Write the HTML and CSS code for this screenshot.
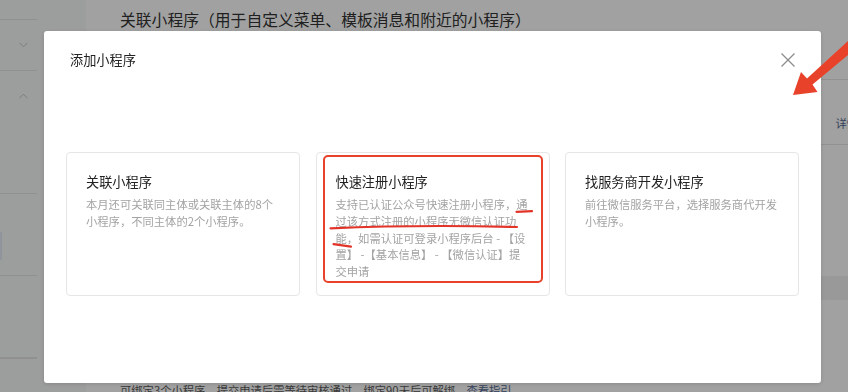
FILE: index.html
```html
<!DOCTYPE html>
<html lang="zh-CN">
<head>
    <meta charset="UTF-8">
    <meta name="viewport" content="width=device-width, initial-scale=1.0">
    <title>添加小程序</title>
    <link rel="stylesheet" href="styles.css">
</head>
<body>

<div class="page">
    <!-- left menu -->
    <aside class="sidebar">
        <div class="menu">
            <div class="menu-item top"></div>
            <div class="menu-item fold">
                <svg class="chevron" width="9" height="6" viewBox="0 0 9 6"><polyline points="0.5,0.8 4.5,4.8 8.5,0.8"/></svg>
            </div>
            <div class="menu-item group">
                <svg class="chevron" width="9" height="6" viewBox="0 0 9 6"><polyline points="0.5,5.2 4.5,1.2 8.5,5.2"/></svg>
            </div>
            <div class="menu-item sub active"></div>
            <div class="menu-item sub"></div>
            <div class="menu-item"></div>
        </div>
    </aside>

    <main class="main">
        <h1 class="page-title">关联小程序（用于自定义菜单、模板消息和附近的小程序）</h1>
        <div class="bind-list">
            <div class="bind-row"><span class="row-link">详情</span></div>
        </div>
        <div class="table-head"></div>
        <p class="bind-tip">可绑定3个小程序，提交申请后需等待审核通过，绑定90天后可解绑。<a href="#">查看指引</a></p>
    </main>
</div>

<div class="mask"></div>

<!-- dialog -->
<div class="dialog">
    <div class="dialog-head">
        <h3 class="dialog-title">添加小程序</h3>
        <svg class="dialog-close" width="14" height="14" viewBox="0 0 14 14">
            <line x1="0.5" y1="0.5" x2="13.5" y2="13.5"/>
            <line x1="13.5" y1="0.5" x2="0.5" y2="13.5"/>
        </svg>
    </div>
    <div class="choice-list">
        <div class="choice">
            <h4 class="choice-title">关联小程序</h4>
            <p class="choice-desc">本月还可关联同主体或关联主体的8个<br>小程序，不同主体的2个小程序。</p>
        </div>
        <div class="choice">
            <h4 class="choice-title">快速注册小程序</h4>
            <p class="choice-desc">支持已认证公众号快速注册小程序，通<br>过该方式注册的小程序无微信认证功<br>能，如需认证可登录小程序后台 - 【设<br>置】 -【基本信息】 - 【微信认证】提<br>交申请</p>
            <div class="mark-box"></div>
        </div>
        <div class="choice">
            <h4 class="choice-title">找服务商开发小程序</h4>
            <p class="choice-desc">前往微信服务平台，选择服务商代开发<br>小程序。</p>
        </div>
    </div>
</div>

<!-- hand drawn marks -->
<svg class="marks" width="848" height="392" viewBox="0 0 848 392">
    <path d="M516.5,211.8 L532,211.2"/>
    <path d="M330.5,228.3 Q420,224.5 517,227"/>
    <path d="M333.5,244.2 L351,246.6"/>
    <polygon points="793,95 801,72 807,78.5 848,41 848,55 812.5,84.5 817.5,92"/>
</svg>

</body>
</html>
```

FILE: styles.css
```css
/* page under the mask */
body {
    margin: 0;
    width: 848px;
    height: 392px;
    overflow: hidden;
    font-family: "Noto Sans CJK SC", "Noto Sans", sans-serif;
    background-color: #ffffff;
}

.page {
    display: flex;
    height: 392px;
}

.sidebar {
    width: 86px;
    flex-shrink: 0;
    background-color: #f8f9f9;
}

.menu {
    width: 37px;
}

.menu-item {
    box-sizing: border-box;
    border-bottom: 1px solid #e4e4e4;
    display: flex;
    justify-content: flex-end;
    padding-right: 9px;
}

.menu-item.top {
    height: 20px;
}

.menu-item.fold {
    height: 51px;
    align-items: center;
}

.menu-item.group {
    height: 123px;
    padding-top: 22px;
}

.menu-item.sub {
    height: 82px;
}

.menu-item.active {
    background: linear-gradient(#e4edf8, #e4edf8) 0 38px / 2px 28px no-repeat;
}

.chevron polyline {
    fill: none;
    stroke: #c4c4c4;
    stroke-width: 1;
}

.main {
    flex: 1;
    padding-left: 34px;
}

.page-title {
    margin: 0;
    padding-top: 8px;
    font-size: 15.8px;
    line-height: 24px;
    font-weight: normal;
    color: #333;
}

.bind-list {
    margin-top: 47px;
    border-top: 1px solid #e6e6e6;
}

.bind-row {
    height: 65px;
    border-bottom: 1px solid #e6e6e6;
    display: flex;
    justify-content: flex-end;
    padding-top: 34px;
    box-sizing: border-box;
}

.row-link {
    font-size: 11.3px;
    line-height: 18px;
    color: #576b95;
    margin-right: -10px;
}

.table-head {
    margin-top: 131px;
    height: 24px;
    background-color: #f2f2f2;
}

.bind-tip {
    margin: 82px 0 0;
    font-size: 11.3px;
    line-height: 16px;
    color: #5c5c5c;
    white-space: nowrap;
}

.bind-tip a {
    color: #576b95;
    text-decoration: none;
}

.mask {
    position: fixed;
    top: 0;
    left: 0;
    right: 0;
    bottom: 0;
    background-color: rgba(0, 0, 0, 0.37);
}

/* dialog */
.dialog {
    position: fixed;
    left: 44px;
    top: 31px;
    width: 777px;
    height: 352px;
    background-color: #fff;
    border-radius: 3px;
    box-shadow: 0 1px 4px rgba(0, 0, 0, 0.15);
}

.dialog-head {
    position: relative;
    padding: 19px 26px 0;
}

.dialog-title {
    margin: 0;
    font-size: 13.2px;
    line-height: 20px;
    font-weight: normal;
    color: #222;
}

.dialog-close {
    position: absolute;
    right: 26px;
    top: 22px;
}

.dialog-close line {
    stroke: #8c8c8c;
    stroke-width: 1.2;
}

.choice-list {
    display: grid;
    grid-template-columns: repeat(3, 1fr);
    column-gap: 15.5px;
    padding: 0 22px;
    margin-top: 82px;
}

.choice {
    position: relative;
    box-sizing: border-box;
    height: 144px;
    border: 1px solid #e6e6e6;
    border-radius: 4px;
    padding: 19px 8px 0 19px;
}

.choice-title {
    margin: 0;
    font-size: 13.2px;
    line-height: 20px;
    font-weight: normal;
    color: #222;
}

.choice-desc {
    margin: 4px 0 0;
    font-size: 11.3px;
    line-height: 16.8px;
    color: #a3a3a3;
    white-space: nowrap;
}

/* red annotation */
.mark-box {
    position: absolute;
    left: 6px;
    top: 2px;
    width: 220px;
    height: 128px;
    box-sizing: border-box;
    border: 2px solid #e8412c;
    border-radius: 5px;
}

.marks {
    position: fixed;
    top: 0;
    left: 0;
    pointer-events: none;
}

.marks path {
    fill: none;
    stroke: #e3342a;
    stroke-width: 2.2;
    stroke-linecap: round;
}

.marks polygon {
    fill: #e8422a;
}
```
